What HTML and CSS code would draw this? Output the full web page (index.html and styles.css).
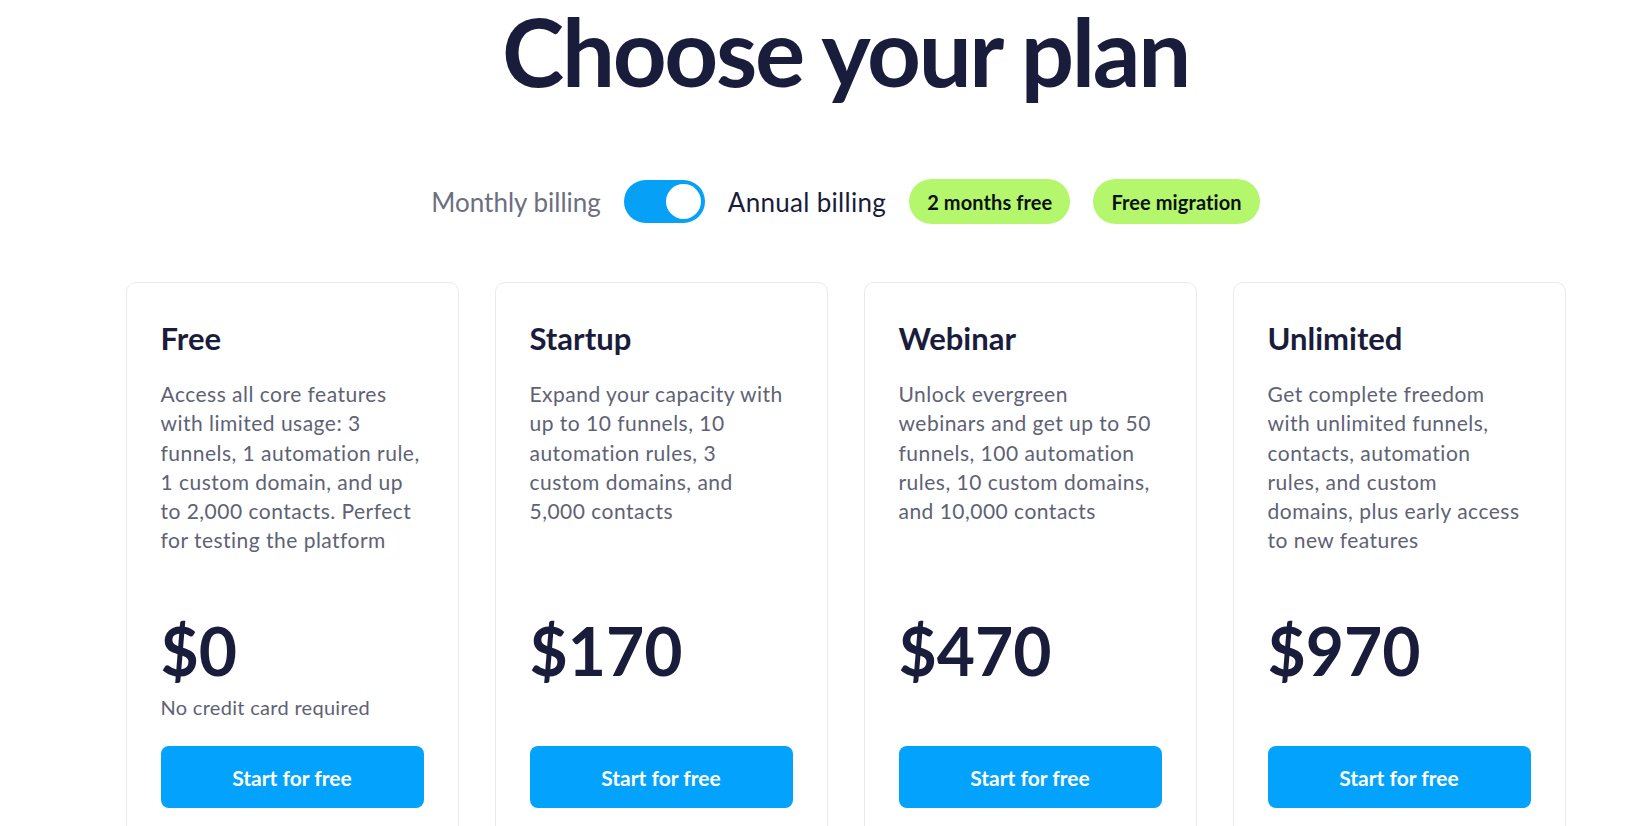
FILE: index.html
```html
<!DOCTYPE html>
<html>
<head>
    <title>Choose your plan</title>
    <link rel="stylesheet" href="styles.css">
</head>
<body>

    <div class="pricing">
        <h1 class="title">Choose your plan</h1>

        <div class="billing">
            <span class="billing-label">Monthly billing</span>
            <span class="switch on"><span class="knob"></span></span>
            <span class="billing-label active">Annual billing</span>
            <span class="pill">2 months free</span>
            <span class="pill">Free migration</span>
        </div>

        <div class="plans">
            <div class="plan">
                <h2>Free</h2>
                <p class="desc">Access all core features<br>with limited usage: 3<br>funnels, 1 automation rule,<br>1 custom domain, and up<br>to 2,000 contacts. Perfect<br>for testing the platform</p>
                <div class="price">$0</div>
                <div class="note">No credit card required</div>
                <button class="start-btn">Start for free</button>
            </div>

            <div class="plan">
                <h2>Startup</h2>
                <p class="desc">Expand your capacity with<br>up to 10 funnels, 10<br>automation rules, 3<br>custom domains, and<br>5,000 contacts</p>
                <div class="price">$170</div>
                <div class="note"></div>
                <button class="start-btn">Start for free</button>
            </div>

            <div class="plan">
                <h2>Webinar</h2>
                <p class="desc">Unlock evergreen<br>webinars and get up to 50<br>funnels, 100 automation<br>rules, 10 custom domains,<br>and 10,000 contacts</p>
                <div class="price">$470</div>
                <div class="note"></div>
                <button class="start-btn">Start for free</button>
            </div>

            <div class="plan">
                <h2>Unlimited</h2>
                <p class="desc">Get complete freedom<br>with unlimited funnels,<br>contacts, automation<br>rules, and custom<br>domains, plus early access<br>to new features</p>
                <div class="price">$970</div>
                <div class="note"></div>
                <button class="start-btn">Start for free</button>
            </div>
        </div>
    </div>

</body>
</html>
```

FILE: styles.css
```css
body {
    margin: 0;
    background-color: #ffffff;
    font-family: Lato, "Noto Sans", sans-serif;
    color: #191c3a;
}

.pricing {
    display: flex;
    flex-direction: column;
    align-items: center;
    padding-left: 44px;
}

.title {
    margin: 4px 0 0;
    font-size: 94px;
    line-height: 1;
    font-weight: 700;
    letter-spacing: -2.3px;
    color: #191c3a;
}

.billing {
    display: flex;
    align-items: center;
    gap: 23px;
    margin-top: 81px;
    height: 45px;
}

.billing-label {
    font-size: 26px;
    color: #6c6f80;
}

.billing-label.active {
    color: #191c3a;
    letter-spacing: 0.3px;
}

.switch {
    display: flex;
    align-items: center;
    justify-content: flex-end;
    width: 81px;
    height: 43px;
    padding: 0 4px;
    box-sizing: border-box;
    border-radius: 22px;
    background-color: #06a0f6;
}

.knob {
    width: 35px;
    height: 35px;
    border-radius: 50%;
    background-color: #ffffff;
}

.pill {
    display: flex;
    align-items: center;
    height: 45px;
    padding: 0 18px;
    border-radius: 23px;
    background-color: #b4f76c;
    font-size: 20px;
    font-weight: 700;
    letter-spacing: 0.1px;
    color: #0c1116;
}

.plans {
    display: grid;
    grid-template-columns: repeat(4, 333px);
    gap: 36px;
    margin-top: 58px;
}

.plan {
    display: flex;
    flex-direction: column;
    padding: 37px 34px 34px;
    border: 1px solid #ebebef;
    border-radius: 10px;
}

.plan h2 {
    margin: 0 0 22px;
    font-size: 31px;
    line-height: 1.2;
    font-weight: 700;
    color: #191c3a;
}

.desc {
    margin: 0 0 64px;
    font-size: 21px;
    line-height: 29.2px;
    letter-spacing: 0.48px;
    white-space: nowrap;
    color: #5e6275;
}

.price {
    margin-top: auto;
    font-size: 66px;
    line-height: 1;
    font-weight: 700;
    color: #191c3a;
}

.note {
    height: 26px;
    margin-top: 10px;
    font-size: 20px;
    line-height: 26px;
    letter-spacing: 0.3px;
    color: #5e6275;
}

.start-btn {
    height: 62px;
    margin-top: 26px;
    border: none;
    border-radius: 8px;
    background-color: #02a2fd;
    color: #ffffff;
    font-family: inherit;
    font-size: 21px;
    font-weight: 700;
    cursor: pointer;
}
```
